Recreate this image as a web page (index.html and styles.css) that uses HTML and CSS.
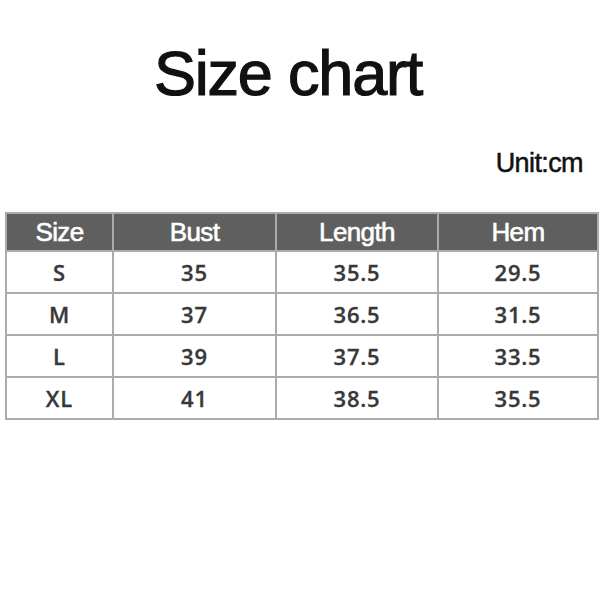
FILE: index.html
```html
<!DOCTYPE html>
<html>
<head>
<meta charset="utf-8">
<link rel="stylesheet" href="styles.css">
</head>
<body>
<div class="page">
  <h1 class="title">Size chart</h1>
  <div class="unit">Unit:cm</div>
  <table class="chart">
    <colgroup>
      <col class="c1"><col class="c2"><col class="c3"><col class="c4">
    </colgroup>
    <thead>
      <tr><th>Size</th><th>Bust</th><th>Length</th><th>Hem</th></tr>
    </thead>
    <tbody>
      <tr><td>S</td><td>35</td><td>35.5</td><td>29.5</td></tr>
      <tr><td>M</td><td>37</td><td>36.5</td><td>31.5</td></tr>
      <tr><td>L</td><td>39</td><td>37.5</td><td>33.5</td></tr>
      <tr><td>XL</td><td>41</td><td>38.5</td><td>35.5</td></tr>
    </tbody>
  </table>
</div>
</body>
</html>
```
FILE: styles.css
```css
html, body {
  margin: 0;
  padding: 0;
  background: #ffffff;
}
.page {
  width: 600px;
  height: 600px;
  display: flex;
  flex-direction: column;
}
.title {
  margin: 42px 0 0 0;
  padding-right: 24px;
  text-align: center;
  font-family: "Liberation Sans", Arial, sans-serif;
  font-weight: 400;
  font-size: 63px;
  line-height: 63px;
  letter-spacing: -1.2px;
  color: #111111;
  -webkit-text-stroke: 1.2px #111111;
}
.unit {
  margin-top: 45px;
  align-self: flex-end;
  padding-right: 17px;
  font-family: "Liberation Sans", Arial, sans-serif;
  font-size: 27px;
  line-height: 26px;
  letter-spacing: -0.6px;
  color: #111111;
  -webkit-text-stroke: 0.5px #111111;
}
.chart {
  margin: 36px 0 0 5px;
  width: 592px;
  border-collapse: collapse;
  table-layout: fixed;
}
.c1 { width: 107px; }
.c2 { width: 163px; }
.c3 { width: 162px; }
.c4 { width: 160px; }
.chart th, .chart td {
  border: 2px solid #ababab;
  text-align: center;
  padding: 0;
}
.chart th {
  height: 36px;
  background: #5f5f5f;
  color: #ffffff;
  font-family: "Liberation Sans", Arial, sans-serif;
  font-weight: 400;
  font-size: 26px;
  letter-spacing: -0.6px;
  -webkit-text-stroke: 0.6px #ffffff;
}
.chart td {
  height: 40px;
  color: #383838;
  font-family: "Open Sans", "Noto Sans", sans-serif;
  font-weight: 600;
  font-size: 22px;
  letter-spacing: 0.8px;
  -webkit-text-stroke: 0.3px #383838;
}
```
